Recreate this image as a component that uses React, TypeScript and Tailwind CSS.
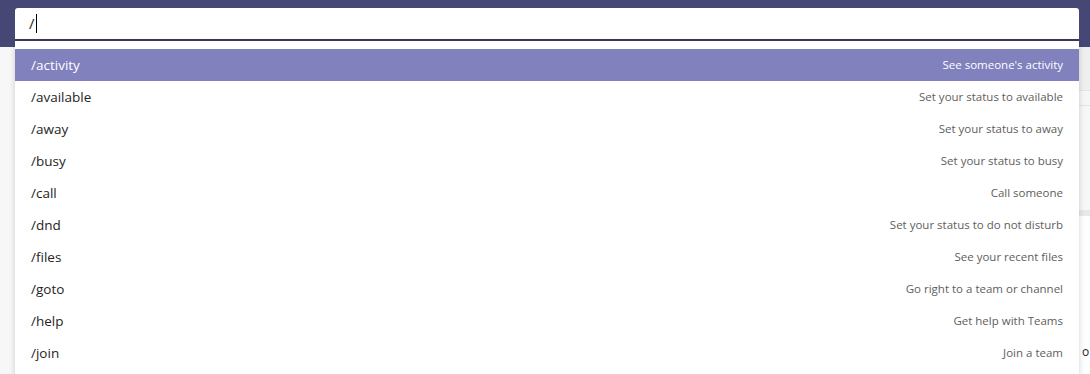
import React from "react";

interface ICommand {
  name: string;
  description: string;
}

const commands: ICommand[] = [
  { name: "/activity", description: "See someone's activity" },
  { name: "/available", description: "Set your status to available" },
  { name: "/away", description: "Set your status to away" },
  { name: "/busy", description: "Set your status to busy" },
  { name: "/call", description: "Call someone" },
  { name: "/dnd", description: "Set your status to do not disturb" },
  { name: "/files", description: "See your recent files" },
  { name: "/goto", description: "Go right to a team or channel" },
  { name: "/help", description: "Get help with Teams" },
  { name: "/join", description: "Join a team" },
];

const App: React.FC = () => {
  const selected = 0;

  return (
    <div
      className="relative w-[1090px] h-[374px] overflow-hidden bg-[#f7f7f7]"
      style={{ fontFamily: '"Open Sans", "Noto Sans", sans-serif' }}
    >
      {/* header with search box */}
      <div className="h-[47px] bg-[#464775] px-[15px] pt-[8px] pr-[11px]">
        <div className="flex h-[33px] items-center rounded-t-[3px] border-b-2 border-[#3b3a58] bg-white px-[14px]">
          <span className="text-[15px] text-[#252423]">/</span>
          <span className="ml-[1px] h-[19px] w-[1px] bg-black"></span>
        </div>
      </div>

      {/* page behind the menu */}
      <div className="flex h-[327px]">
        <div className="flex-1"></div>
        <div className="flex w-[11px] flex-col bg-[#efefef]">
          <div className="mt-[43px] h-[1px] bg-[#e4e4e4]"></div>
          <div className="h-[14px] bg-[#f6f6f6]"></div>
          <div className="h-[1px] bg-[#e4e4e4]"></div>
          <div className="h-[104px] bg-[#f7f7f7]"></div>
          <div className="h-[6px] bg-[#e8e8e8]"></div>
          <div className="flex-1 overflow-hidden bg-white pt-[128px] pl-[3px] text-[12px] leading-[16px] text-[#252423] whitespace-nowrap">
            o s
          </div>
        </div>
      </div>

      {/* command menu */}
      <div className="absolute left-[15px] top-[41px] w-[1064px] bg-white pt-[8px] pb-[8px] shadow-[0_2px_6px_rgba(0,0,0,0.18)]">
        {commands.map((cmd, index) => (
          <div
            key={cmd.name}
            className={`flex h-[32px] items-center justify-between px-[16px] ${
              index === selected ? "bg-[#8081bd] text-white" : "text-[#252423]"
            }`}
          >
            <span className="text-[13.5px]">{cmd.name}</span>
            <span
              className={`text-[11.5px] ${
                index === selected ? "text-white" : "text-[#605e5c]"
              }`}
            >
              {cmd.description}
            </span>
          </div>
        ))}
      </div>
    </div>
  );
};

export default App;
